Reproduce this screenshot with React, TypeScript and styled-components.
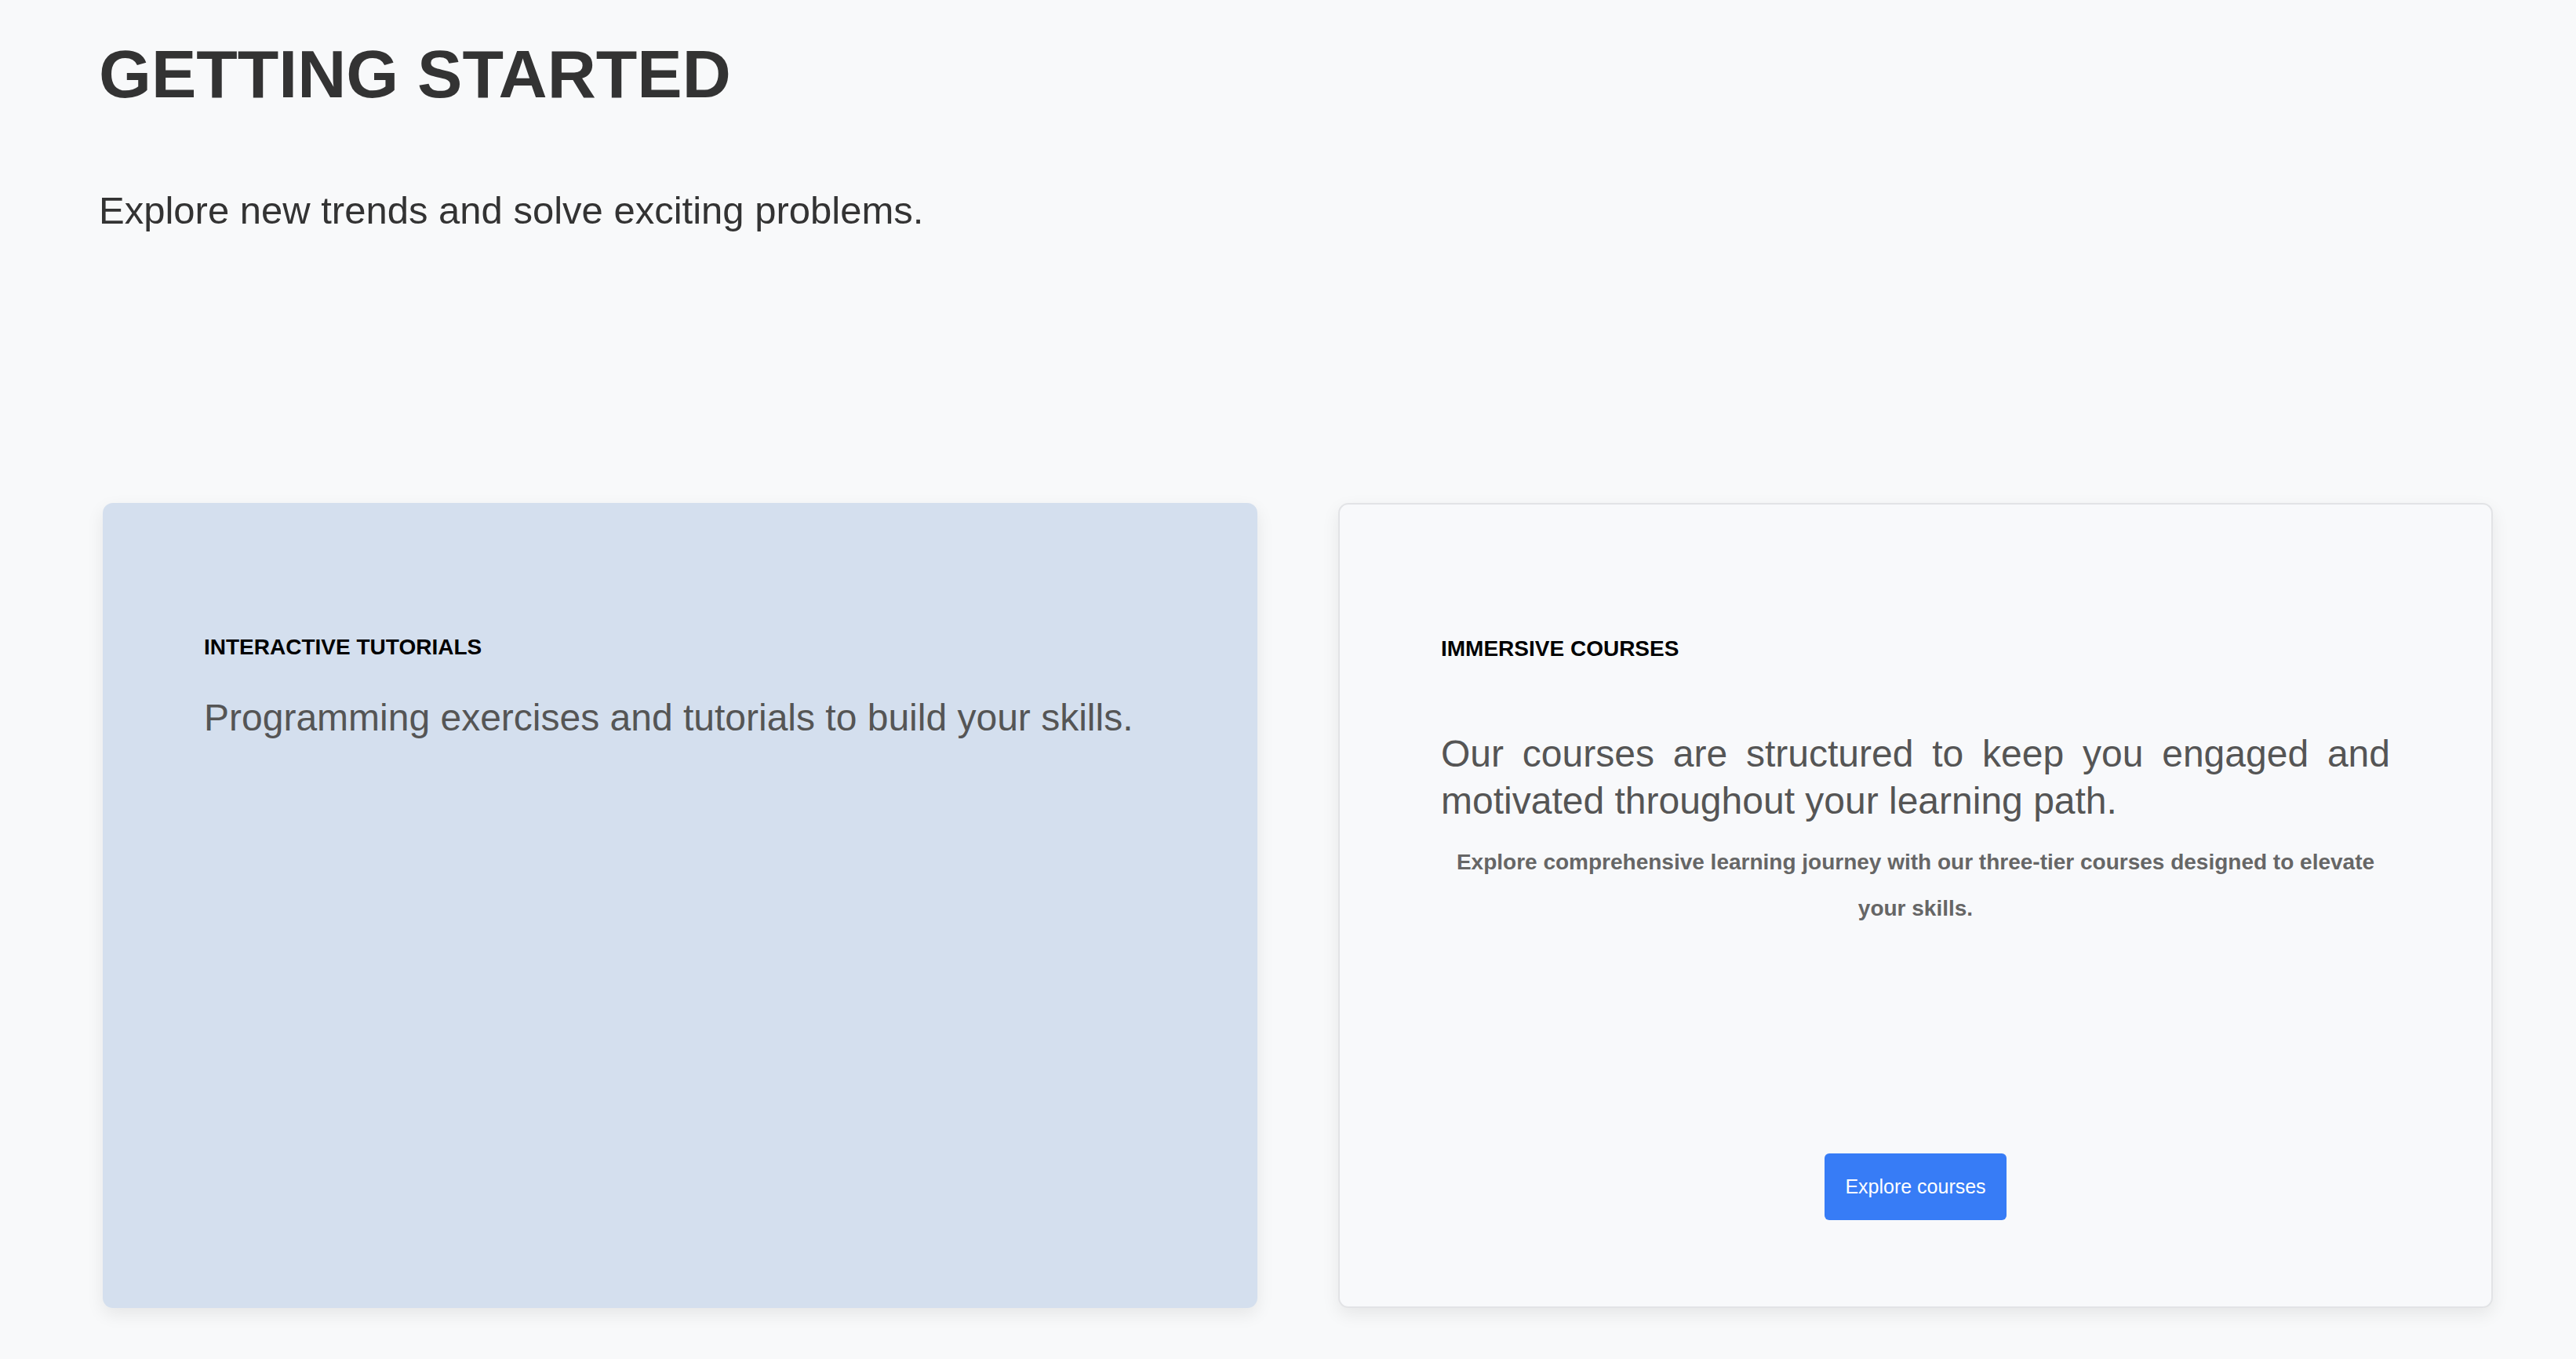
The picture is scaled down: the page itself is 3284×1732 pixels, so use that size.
import React from "react";
import styled, { createGlobalStyle } from "styled-components";

const GlobalStyle = createGlobalStyle`
  html, body {
    margin: 0;
    padding: 0;
    background: #f8f9fa;
  }
  body {
    font-family: "Liberation Sans", Arial, sans-serif;
  }
`;

const App = () => {
  return (
    <>
      <GlobalStyle />
      <Page>
        <Title>GETTING STARTED</Title>
        <Lead>Explore new trends and solve exciting problems.</Lead>
        <Cards>
          <Card tinted>
            <Label>INTERACTIVE TUTORIALS</Label>
            <Body>Programming exercises and tutorials to build your skills.</Body>
          </Card>
          <Card>
            <Label>IMMERSIVE COURSES</Label>
            <Body spaced>
              Our courses are structured to keep you engaged and motivated
              throughout your learning path.
            </Body>
            <Note>
              Explore comprehensive learning journey with our three-tier courses
              designed to elevate your skills.
            </Note>
            <Action>
              <Button>Explore courses</Button>
            </Action>
          </Card>
        </Cards>
      </Page>
    </>
  );
};

export default App;

const Page = styled.div`
  padding: 45px 106px 60px 126px;
  color: #333;
`;

const Title = styled.h1`
  margin: 0;
  font-size: 86px;
  font-weight: 700;
  line-height: 1.15;
  color: #333;
`;

const Lead = styled.p`
  margin: 96px 0 0;
  font-size: 49px;
  line-height: 1.15;
  color: #333;
`;

const Cards = styled.div`
  display: grid;
  grid-template-columns: 1fr 1fr;
  gap: 103px;
  margin: 345px 0 0 5px;
`;

const Card = styled.div<{ tinted?: boolean }>`
  min-height: 1026px;
  box-sizing: border-box;
  display: flex;
  flex-direction: column;
  padding: 168px 129px 110px;
  border-radius: 13px;
  background: ${(p) => (p.tinted ? "#d4dfee" : "#f8f9fb")};
  border: ${(p) => (p.tinted ? "none" : "2px solid #e2e3e6")};
  box-shadow: 0 8px 22px rgba(0, 0, 0, 0.08);
`;

const Label = styled.h3`
  margin: 0;
  font-size: 28px;
  font-weight: 700;
  line-height: 32px;
  color: #000;
`;

const Body = styled.p<{ spaced?: boolean }>`
  margin: ${(p) => (p.spaced ? "88px" : "44px")} 0 0;
  font-size: 48px;
  line-height: 60px;
  color: #555;
  text-align: justify;
`;

const Note = styled.p`
  margin: 18px 0 0;
  font-size: 28px;
  font-weight: 700;
  line-height: 59px;
  color: #666;
  text-align: center;
`;

const Action = styled.div`
  margin-top: auto;
  display: flex;
  justify-content: center;
`;

const Button = styled.button`
  height: 85px;
  padding: 0 26px;
  border: none;
  border-radius: 6px;
  background: #377cf6;
  color: #fff;
  font-family: "Liberation Sans", Arial, sans-serif;
  font-size: 25px;
  cursor: pointer;
`;
